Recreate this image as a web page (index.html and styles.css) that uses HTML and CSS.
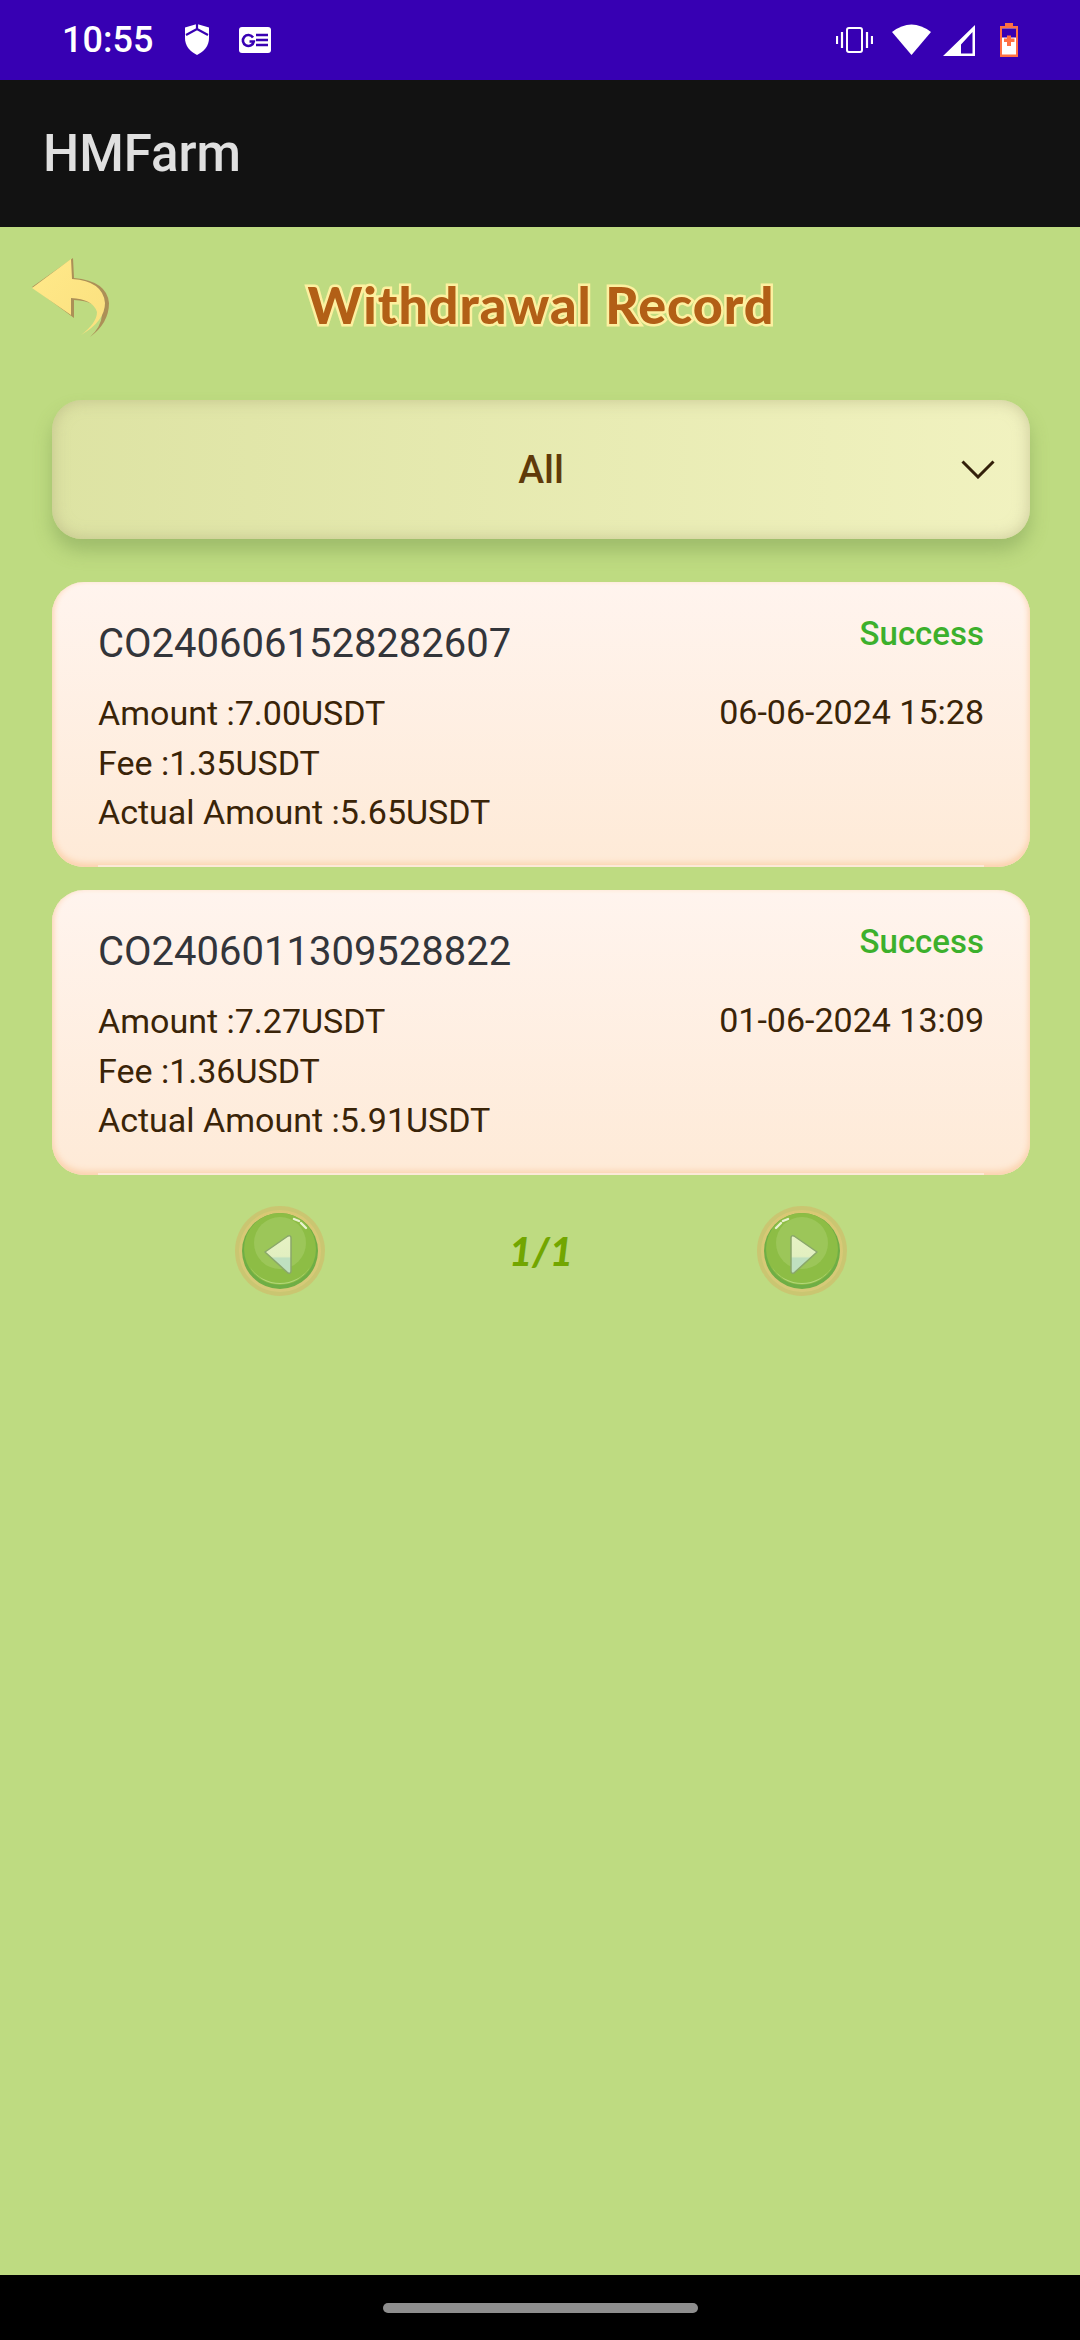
FILE: index.html
```html
<!DOCTYPE html>
<html lang="en">
<head>
  <meta charset="UTF-8">
  <title>HMFarm</title>
  <meta name="viewport" content="width=device-width, initial-scale=1">
  <link rel="stylesheet" href="styles.css">
</head>
<body>
  <svg class="defs" width="0" height="0">
    <defs>
      <linearGradient id="arrowFill" x1="0" y1="0" x2="1" y2="1">
        <stop offset="0" stop-color="#ffe98a"/>
        <stop offset="1" stop-color="#fbe07e"/>
      </linearGradient>
      <linearGradient id="ringFill" x1="0" y1="0" x2="0" y2="1">
        <stop offset="0" stop-color="#d9c874"/>
        <stop offset="1" stop-color="#d6ca78"/>
      </linearGradient>
      <linearGradient id="triFill" x1="0" y1="0" x2="0" y2="1">
        <stop offset="0" stop-color="#e6f2c4"/>
        <stop offset="0.55" stop-color="#e2efc0"/>
        <stop offset="0.6" stop-color="#bfe0c0"/>
        <stop offset="1" stop-color="#bfe0c0"/>
      </linearGradient>
      <symbol id="pageBtn" viewBox="0 0 92 92">
        <circle cx="46" cy="46" r="45" fill="#cdbf6c" opacity="0.75"/>
        <circle cx="46" cy="46" r="41" fill="url(#ringFill)"/>
        <circle cx="46" cy="46" r="38" fill="#6fae45"/>
        <circle cx="46" cy="44" r="36" fill="#8dbd45"/>
        <circle cx="46" cy="38" r="26" fill="#9cc659"/>
        <path d="M16 62a36 36 0 0 0 60 0a34 32 0 0 1-60 0z" fill="#b4d77a"/>
        <path d="M31 47 L54 31 Q57 30 57 33 L57 66 Q57 69 54 68 Z" fill="url(#triFill)" stroke="#8aa76a" stroke-width="1.5" stroke-linejoin="round"/>
        <path d="M60 14l5 2M67 18l5 5" stroke="#e9f3cf" stroke-width="2.4" stroke-linecap="round"/>
      </symbol>
    </defs>
  </svg>

  <div class="status-bar">
    <span class="clock">10:55</span>
    <svg class="ic-shield" viewBox="0 0 24 31">
      <path d="M12 0L24 3.5V14c0 8-5 13.500-12 17C5 27.500 0 22 0 14V3.500z" fill="#fff"/>
      <path d="M1 11l11-6 11 6M12 0v5" fill="none" stroke="#3700b3" stroke-width="2.2"/>
    </svg>
    <svg class="ic-news" viewBox="0 0 32 26">
      <rect width="32" height="26" rx="3" fill="#fff"/>
      <path d="M14 10.500a5.500 5.500 0 1 0 0.800 4H10.500" fill="none" stroke="#3700b3" stroke-width="2.600"/>
      <path d="M17 8h12M17 13h12M17 18h12" stroke="#3700b3" stroke-width="2.400"/>
    </svg>
    <span class="spacer"></span>
    <svg class="ic-vibrate" viewBox="0 0 37 26">
      <rect x="11" y="1" width="15" height="24" rx="2" fill="none" stroke="#fff" stroke-width="2"/>
      <path d="M6 5v16M1 9v8M31 5v16M36 9v8" stroke="#fff" stroke-width="2.200"/>
    </svg>
    <svg class="ic-wifi" viewBox="0 0 39 32">
      <path d="M0 9Q19.500-6 39 9L19.500 32z" fill="#fff"/>
    </svg>
    <svg class="ic-signal" viewBox="0 0 32 31">
      <path d="M32 0V31H0zM29.500 7L18 19.500V28.500H29.500z" fill="#fff" fill-rule="evenodd"/>
    </svg>
    <svg class="ic-battery" viewBox="0 0 20 34">
      <path d="M6 0h8v3h5v31H1V3h5z" fill="#ff7043"/>
      <rect x="3" y="5.500" width="14" height="26" fill="#fff"/>
      <rect x="3" y="5.500" width="14" height="9" fill="#3700b3"/>
      <path d="M8 12.500h4v3h3.500v3.500H12v4H8v-4H5v-3.500h3z" fill="#ff7043"/>
    </svg>
  </div>

  <header class="app-bar">HMFarm</header>

  <main class="content">
    <div class="title-row">
      <svg class="back" viewBox="0 0 81 81">
        <path d="M59 80Q78 66 78 46Q76 24 43 21L42 1L1 30L43 61L43 43Q66 44 71 58Q70 70 59 80Z" fill="#a98250" opacity="0.85"/>
        <path d="M50 78Q74 64 74 46Q72 24 41 22L40 2L1 31L40 58L40 41Q62 42 66 55Q66 66 50 78Z" fill="url(#arrowFill)"/>
      </svg>
      <h1 class="page-title">Withdrawal Record</h1>
    </div>

    <div class="filter">
      <span class="filter-label">All</span>
      <svg class="chevron" viewBox="0 0 34 19">
        <path d="M1.500 1.500L17 17L32.500 1.500" fill="none" stroke="#33200a" stroke-width="3"/>
      </svg>
    </div>

    <div class="card">
      <div class="card-left">
        <div class="order-no">CO2406061528282607</div>
        <div class="order-lines">
          <div>Amount :7.00USDT</div>
          <div>Fee :1.35USDT</div>
          <div>Actual Amount :5.65USDT</div>
        </div>
      </div>
      <div class="card-right">
        <div class="state">Success</div>
        <div class="date">06-06-2024 15:28</div>
      </div>
    </div>

    <div class="card">
      <div class="card-left">
        <div class="order-no">CO2406011309528822</div>
        <div class="order-lines">
          <div>Amount :7.27USDT</div>
          <div>Fee :1.36USDT</div>
          <div>Actual Amount :5.91USDT</div>
        </div>
      </div>
      <div class="card-right">
        <div class="state">Success</div>
        <div class="date">01-06-2024 13:09</div>
      </div>
    </div>

    <div class="pager">
      <svg class="page-btn"><use href="#pageBtn"/></svg>
      <span class="page-num">1/1</span>
      <svg class="page-btn flip"><use href="#pageBtn"/></svg>
    </div>
  </main>

  <div class="nav-bar"><span class="home-pill"></span></div>
</body>
</html>
```

FILE: styles.css
```css
* { box-sizing: border-box; }
html, body { margin: 0; height: 100%; }
body { width: 1080px; height: 2340px; display: flex; flex-direction: column; font-family: Roboto, sans-serif; background: #bedb81; overflow: hidden; }
.defs { position: absolute; }

.status-bar { height: 80px; flex: none; background: #3700b3; color: #fff; display: flex; align-items: center; padding-left: 62px; padding-right: 61px; }
.clock { font-size: 36px; font-weight: 500; width: 123px; }
.spacer { flex: 1; }
.ic-shield { width: 24px; height: 31px; margin-right: 30px; margin-top: -1px; }
.ic-news { width: 32px; height: 26px; }
.ic-vibrate { width: 37px; height: 26px; margin-right: 19px; }
.ic-wifi { width: 39px; height: 32px; margin-right: 12px; margin-top: -2px; }
.ic-signal { width: 32px; height: 31px; margin-right: 24px; }
.ic-battery { width: 20px; height: 34px; }

.app-bar { height: 147px; flex: none; background: #121212; color: #e0e0e0; font-size: 51px; font-weight: 500; line-height: 147px; padding-left: 43px; }

.content { flex: 1; padding: 30px 50px 0 52px; }
.title-row { display: flex; justify-content: center; position: relative; height: 81px; margin-bottom: 62px; }
.back { position: absolute; left: -21px; top: 0; width: 81px; height: 81px; }
.page-title { margin: 20px 0 0; font-family: Lato, sans-serif; font-weight: 900; font-size: 52px; line-height: 54px; color: #b25f16; -webkit-text-stroke: 5px #fdf0a0; paint-order: stroke fill; letter-spacing: 1px; }

.filter { height: 139px; border-radius: 30px; position: relative; display: flex; align-items: center; justify-content: center; background: linear-gradient(90deg, #dde3a3, #f1f2c0); box-shadow: inset 0 0 16px rgba(170, 165, 120, 0.55), 0 12px 18px rgba(120, 150, 80, 0.45); margin-bottom: 43px; }
.filter-label { font-size: 39px; font-weight: 500; color: #5f3a0a; }
.chevron { position: absolute; right: 35px; top: 60px; width: 34px; height: 19px; }

.card { position: relative; height: 285px; border-radius: 32px; padding: 32px 46px 0; margin-bottom: 23px; display: flex; justify-content: space-between; background: linear-gradient(180deg, #fff4ee, #feead7); box-shadow: inset 0 -4px 6px #fbd2ae, inset 4px 0 6px -3px #fde0c8, inset -4px 0 6px -3px #fde0c8; }
.card::after { content: ""; position: absolute; left: 46px; right: 46px; bottom: 0; height: 2px; background: #fde9d8; }
.card-left { padding-top: 5px; }
.order-no { font-size: 40px; line-height: 50px; color: #33353a; margin-bottom: 20px; }
.order-lines { font-size: 34px; line-height: 49.5px; color: #3a2408; }
.card-right { text-align: right; }
.state { font-size: 33px; font-weight: 500; line-height: 40px; color: #3cb02c; margin-bottom: 38px; }
.date { font-size: 34px; line-height: 40px; color: #3a2408; }

.pager { display: flex; align-items: center; justify-content: space-between; padding: 0 182px; margin-top: 30px; }
.page-btn { width: 92px; height: 92px; }
.flip { transform: scaleX(-1); }
.page-num { font-family: Lato, sans-serif; font-weight: 900; font-style: italic; font-size: 40px; color: #72a600; }

.nav-bar { height: 65px; flex: none; background: #000; display: flex; justify-content: center; padding-top: 28px; }
.home-pill { width: 315px; height: 10px; border-radius: 5px; background: #8e8e8e; }
```
